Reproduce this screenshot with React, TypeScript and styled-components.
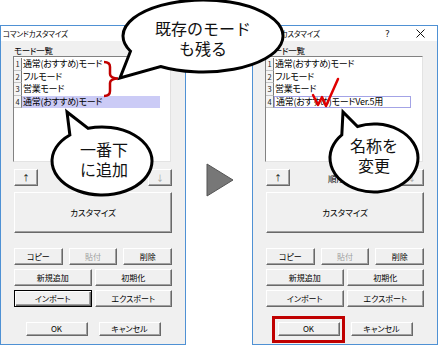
import * as React from "react";
import styled, { createGlobalStyle } from "styled-components";

const GlobalStyle = createGlobalStyle`
  html, body {
    margin: 0;
    padding: 0;
    background: #ffffff;
  }
  body {
    font-family: "Noto Sans CJK JP", "Noto Sans", sans-serif;
  }
`;

const MODES = ["通常(おすすめ)モード", "フルモード", "営業モード", "通常(おすすめ)モード"];

// ellipse callout with a wedge tail, angles in degrees (y down)
const bubblePath = (
  cx: number,
  cy: number,
  rx: number,
  ry: number,
  from: number,
  to: number,
  tx: number,
  ty: number
) => {
  const pt = (deg: number) => {
    const r = (deg * Math.PI) / 180;
    return [cx + rx * Math.cos(r), cy + ry * Math.sin(r)];
  };
  const [x1, y1] = pt(from);
  const [x2, y2] = pt(to);
  return `M${x1} ${y1} A${rx} ${ry} 0 1 1 ${x2} ${y2} L${tx} ${ty} Z`;
};

const ModeDialog: React.FC<{ editing?: boolean }> = ({ editing }) => (
  <Dialog>
    <TitleBar>
      <Title>コマンドカスタマイズ</Title>
      <Ctrl>?</Ctrl>
      <Ctrl>
        <svg width="9" height="9" viewBox="0 0 9 9">
          <path d="M0.5 0.5 L8.5 8.5 M8.5 0.5 L0.5 8.5" stroke="#111" strokeWidth="1" />
        </svg>
      </Ctrl>
    </TitleBar>
    <Body>
      <Label>モード一覧</Label>
      <ListBox>
        {MODES.map((m, i) => {
          const last = i === MODES.length - 1;
          return (
            <Row key={i}>
              <NumCell>{i + 1}</NumCell>
              {last && editing ? (
                <EditCell>{m}Ver.5用</EditCell>
              ) : (
                <RowText $selected={last}>{m}</RowText>
              )}
            </Row>
          );
        })}
      </ListBox>
      <OrderRow>
        <Button $w={24}>↑</Button>
        <OrderLabel>順序変更</OrderLabel>
        <Button $w={24} $disabled>↓</Button>
      </OrderRow>
      <BigButton>カスタマイズ</BigButton>
      <ButtonGrid>
        <ButtonRow $cols={3} $gap={6}>
          <Button>コピー</Button>
          <Button $disabled>貼付</Button>
          <Button>削除</Button>
        </ButtonRow>
        <ButtonRow $cols={2} $gap={3}>
          <Button>新規追加</Button>
          <Button>初期化</Button>
        </ButtonRow>
        <ButtonRow $cols={2} $gap={3}>
          <Button $focused={!editing}>インポート</Button>
          <Button>エクスポート</Button>
        </ButtonRow>
      </ButtonGrid>
      <FooterRow>
        <Marked>
          <Button $w={62} $h={14}>OK</Button>
          {editing && <Highlight />}
        </Marked>
        <Button $w={62} $h={14}>キャンセル</Button>
      </FooterRow>
    </Body>
  </Dialog>
);

export default function App() {
  return (
    <Stage>
      <GlobalStyle />
      <ModeDialog />
      <ArrowSlot>
        <svg width="28" height="34" viewBox="0 0 28 34">
          <path d="M1 1 L27 17 L1 33 Z" fill="#777" stroke="#555" strokeWidth="1" />
        </svg>
      </ArrowSlot>
      <ModeDialog editing />

      <Overlay width="438" height="346" viewBox="0 0 438 346">
        <path
          d="M104 62 Q110 62 110 67 L110 74 Q110 78 118 78.5 Q110 79 110 83 L110 91 Q110 96 104 96"
          fill="none"
          stroke="#c00000"
          strokeWidth="2.5"
        />
        <path
          d="M313 95 L318 105 L322 97 L326 106 L338 79"
          fill="none"
          stroke="#e00000"
          strokeWidth="2.5"
          strokeLinejoin="round"
          strokeLinecap="round"
        />
        <path d={bubblePath(203, 36, 80, 36, 155, 122, 120, 78)} fill="#fff" stroke="#000" strokeWidth="3" />
        <path d={bubblePath(102, 161, 50, 34, 254, 230, 67, 112)} fill="#fff" stroke="#000" strokeWidth="3" />
        <path d={bubblePath(374, 158, 44, 34, 248, 223, 343, 112)} fill="#fff" stroke="#000" strokeWidth="3" />
      </Overlay>

      <CalloutText $x={203} $y={38}>
        既存のモード
        <br />
        も残る
      </CalloutText>
      <CalloutText $x={104} $y={159}>
        一番下
        <br />
        に追加
      </CalloutText>
      <CalloutText $x={374} $y={155}>
        名称を
        <br />
        変更
      </CalloutText>
    </Stage>
  );
}

const Stage = styled.div`
  position: relative;
  width: 438px;
  height: 346px;
  overflow: hidden;
  background: #fff;
  display: flex;
  align-items: flex-start;
  padding-top: 25px;
  box-sizing: border-box;
`;

const Dialog = styled.div`
  width: 186px;
  height: 320px;
  flex: none;
  box-sizing: border-box;
  border: 1px solid #4f91d4;
  background: #f0f0f0;
  display: flex;
  flex-direction: column;
  color: #000;
  font-feature-settings: "palt";
`;

const TitleBar = styled.div`
  height: 15px;
  background: #fff;
  display: flex;
  align-items: center;
`;

const Title = styled.div`
  flex: 1;
  padding-left: 2px;
  font-size: 7.5px;
  letter-spacing: -0.2px;
  line-height: 15px;
  white-space: nowrap;
`;

const Ctrl = styled.div`
  width: 33px;
  height: 15px;
  display: flex;
  align-items: center;
  justify-content: center;
  font-family: "DejaVu Sans", sans-serif;
  font-size: 9px;
  color: #222;
`;

const Body = styled.div`
  flex: 1;
  display: flex;
  flex-direction: column;
  padding: 4px 12px 0 12px;
`;

const Label = styled.div`
  font-size: 8.5px;
  letter-spacing: -0.3px;
  line-height: 11px;
  padding-left: 1px;
`;

const ListBox = styled.div`
  width: 158px;
  height: 106px;
  box-sizing: border-box;
  background: #fff;
  border-style: solid;
  border-width: 1px;
  border-color: #828282 #e3e3e3 #e3e3e3 #828282;
  padding-top: 1px;
`;

const Row = styled.div`
  display: flex;
  height: 12.5px;
`;

const NumCell = styled.div`
  width: 8px;
  box-sizing: border-box;
  background: #f4f4f4;
  border-right: 1px solid #7a7a7a;
  border-bottom: 1px solid #c4c4c4;
  font-size: 7.5px;
  line-height: 12px;
  text-align: center;
  color: #222;
`;

const RowText = styled.div<{ $selected?: boolean }>`
  width: 137px;
  padding-left: 1px;
  font-size: 9px;
  letter-spacing: -0.3px;
  line-height: 12.5px;
  white-space: nowrap;
  background: ${(p) => (p.$selected ? "#cbcbf6" : "transparent")};
`;

const EditCell = styled.div`
  width: 137px;
  box-sizing: border-box;
  padding-left: 1px;
  font-size: 9px;
  letter-spacing: -0.3px;
  line-height: 10.5px;
  white-space: nowrap;
  background: #fff;
  border: 1px solid #a3a3e6;
`;

const OrderRow = styled.div`
  margin-top: 7px;
  height: 17px;
  display: flex;
  align-items: center;
  justify-content: space-between;
  padding: 0 1px;
`;

const OrderLabel = styled.div`
  font-size: 8.5px;
`;

const Button = styled.button<{ $w?: number; $h?: number; $focused?: boolean; $disabled?: boolean }>`
  box-sizing: border-box;
  width: ${(p) => (p.$w ? `${p.$w}px` : "100%")};
  height: ${(p) => p.$h ?? 17}px;
  margin: 0;
  padding: 0;
  background: #f0f0f0;
  border: 1px solid;
  border-color: ${(p) => (p.$focused ? "#000" : "#fff #696969 #696969 #fff")};
  box-shadow: ${(p) =>
    p.$focused
      ? "inset 1px 1px 0 #fff, inset -1px -1px 0 #696969, inset -2px -2px 0 #a0a0a0"
      : "inset -1px -1px 0 #a0a0a0"};
  font-family: "Noto Sans CJK JP", sans-serif;
  font-feature-settings: "palt";
  font-size: 8px;
  line-height: 1;
  color: ${(p) => (p.$disabled ? "#a0a0a0" : "#000")};
`;

const BigButton = styled(Button)`
  margin: 6px 0 0 1px;
  width: 158px;
  height: 41px;
  font-size: 8.5px;
`;

const ButtonGrid = styled.div`
  margin: 15px 0 0 1px;
  width: 158px;
  display: flex;
  flex-direction: column;
  gap: 4px;
`;

const ButtonRow = styled.div<{ $cols: number; $gap: number }>`
  display: grid;
  grid-template-columns: repeat(${(p) => p.$cols}, 1fr);
  column-gap: ${(p) => p.$gap}px;
`;

const FooterRow = styled.div`
  margin: 15px 0 0 1px;
  width: 158px;
  display: flex;
  justify-content: center;
  gap: 11px;
`;

const Marked = styled.div`
  position: relative;
  display: flex;
`;

const Highlight = styled.span`
  position: absolute;
  left: -6px;
  right: -5px;
  top: -6px;
  bottom: -7px;
  border: 3px solid #c00000;
`;

const ArrowSlot = styled.div`
  width: 66px;
  flex: none;
  box-sizing: border-box;
  padding: 138px 0 0 20px;
  display: flex;
`;

const Overlay = styled.svg`
  position: absolute;
  left: 0;
  top: 0;
  pointer-events: none;
`;

const CalloutText = styled.div<{ $x: number; $y: number }>`
  position: absolute;
  left: ${(p) => p.$x}px;
  top: ${(p) => p.$y}px;
  transform: translate(-50%, -50%);
  font-family: "Noto Sans CJK JP", sans-serif;
  font-size: 16px;
  line-height: 20px;
  text-align: center;
  white-space: nowrap;
  color: #111;
`;
